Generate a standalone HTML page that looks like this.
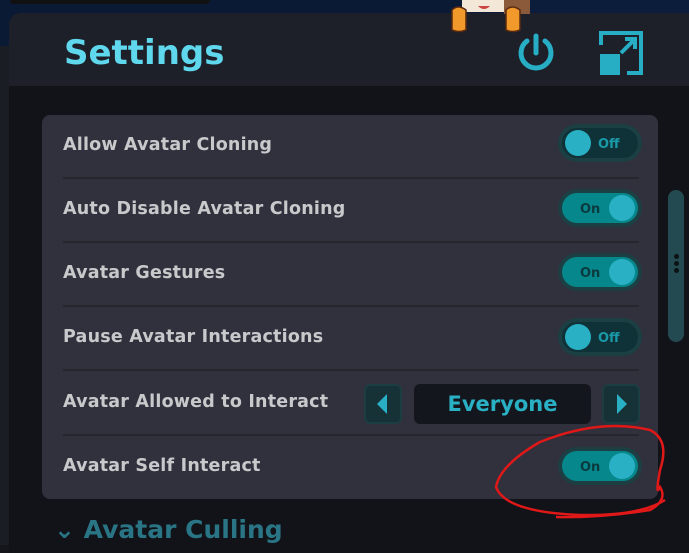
<!DOCTYPE html>
<html><head><style>
*{margin:0;padding:0;box-sizing:border-box}
body{width:689px;height:545px;overflow:hidden;background:#14161c;font-family:"Liberation Sans","DejaVu Sans",sans-serif;position:relative}
.top{position:absolute;left:0;top:0;width:689px;height:46px;background:#0a1a34}
.top .bar{position:absolute;left:10px;top:0;width:200px;height:4px;background:#111;border-radius:0 0 6px 6px}
.top .r{position:absolute;left:465px;top:0;width:224px;height:14px;background:#0c1d3c}
.leftstrip{position:absolute;left:0;top:46px;width:9px;height:499px;background:#1b1d24}
.panel{position:absolute;left:9px;top:13px;width:690px;height:540px;background:#111319;border-radius:12px 0 0 0;overflow:hidden}
.head{position:absolute;left:0;top:0;width:100%;height:73px;background:#1e2029}
.title{position:absolute;left:55px;top:20px;font-size:34px;font-weight:bold;color:#5fd8ee;font-family:"DejaVu Sans",sans-serif}
.card{position:absolute;left:33px;top:102px;width:616px;height:384px;background:#30313d;border-radius:8px}
.row{position:absolute;left:21px;width:576px;height:64px;border-bottom:2px solid #25262e}
.lbl{position:absolute;left:0;top:-2px;line-height:64px;font-size:17.5px;font-weight:bold;color:#c9c9cc;font-family:"DejaVu Sans",sans-serif;letter-spacing:0.2px}
.tg{position:absolute;left:516px;width:84px;height:38px;border-radius:19px;background:#1c3f43}
.tg i{position:absolute;left:4px;top:4px;width:76px;height:30px;border-radius:15px}
.tg b{position:absolute;top:6px;width:26px;height:26px;border-radius:13px;background:#2ab0c4}
.tg span{position:absolute;top:2px;line-height:38px;font-size:13px;font-weight:bold;font-family:"DejaVu Sans",sans-serif}
.off i{background:#0f3238}.off b{left:7px}.off span{left:40px;color:#1a9aa9}
.on i{background:#06878c}.on b{left:51px}.on span{left:22px;color:#0b3a3e}
.scroll{position:absolute;left:659px;top:177px;width:16px;height:152px;background:#234a50;border-radius:8px}
.scroll s{position:absolute;left:6px;width:5px;height:5px;border-radius:3px;background:#0b1214}
</style></head><body>
<div class="top"><div class="bar"></div><div class="r"></div></div>
<div class="leftstrip"></div>
<div class="panel">
 <div class="head"></div>
 <div class="title">Settings</div>
 <svg style="position:absolute;left:505px;top:18px" width="44" height="48" viewBox="0 0 44 48"><path d="M13 10 A15 15 0 1 0 31 10" fill="none" stroke="#27aec4" stroke-width="5" stroke-linecap="round"/><line x1="22" y1="5" x2="22" y2="22" stroke="#27aec4" stroke-width="5" stroke-linecap="round"/></svg>
 <svg style="position:absolute;left:590px;top:18px" width="46" height="46" viewBox="0 0 46 46"><path d="M2 14V2h40v40H28" fill="none" stroke="#27aec4" stroke-width="4"/><rect x="1" y="23" width="20" height="21" fill="#27aec4"/><path d="M22 22L36 8M26 8h10v10" fill="none" stroke="#27aec4" stroke-width="4"/></svg>
 <div class="card">
  <div class="row" style="top:0"><div class="lbl">Allow Avatar Cloning</div></div>
  <div class="row" style="top:64px"><div class="lbl">Auto Disable Avatar Cloning</div></div>
  <div class="row" style="top:128px"><div class="lbl">Avatar Gestures</div></div>
  <div class="row" style="top:192px"><div class="lbl">Pause Avatar Interactions</div></div>
  <div class="row" style="top:256px;height:65px"><div class="lbl" style="line-height:66px">Avatar Allowed to Interact</div></div>
  <div class="row" style="top:321px;border:0"><div class="lbl">Avatar Self Interact</div></div>
  <div class="tg off" style="top:9px"><i></i><b></b><span>Off</span></div>
  <div class="tg on" style="top:74px"><i></i><b></b><span>On</span></div>
  <div class="tg on" style="top:138px"><i></i><b></b><span>On</span></div>
  <div class="tg off" style="top:203px"><i></i><b></b><span>Off</span></div>
  <div class="tg on" style="top:332px"><i></i><b></b><span>On</span></div>
 </div>
 <div class="scroll"><s style="top:64px"></s><s style="top:71px"></s><s style="top:78px"></s></div>
 <div style="position:absolute;left:45px;top:502px;font-size:25px;font-weight:bold;color:#2a7585;font-family:'DejaVu Sans',sans-serif">⌄ Avatar Culling</div>
</div>
<div style="position:absolute;left:364px;top:384px;width:38px;height:40px;background:#163236;border:2px solid #1c3d41;border-radius:6px"><svg width="34" height="36" viewBox="0 0 34 36"><path d="M11 18L21 8v20z" fill="#2ab0c4"/></svg></div>
<div style="position:absolute;left:414px;top:384px;width:177px;height:40px;background:#14161d;border-radius:6px;text-align:center;line-height:40px;font-size:21px;font-weight:bold;color:#2ab0c4;font-family:'DejaVu Sans',sans-serif">Everyone</div>
<div style="position:absolute;left:602px;top:384px;width:38px;height:40px;background:#163236;border:2px solid #1c3d41;border-radius:6px"><svg width="34" height="36" viewBox="0 0 34 36"><path d="M23 18L13 8v20z" fill="#2ab0c4"/></svg></div>
<svg style="position:absolute;left:448px;top:0" width="84" height="34" viewBox="0 0 84 34"><rect x="14" y="0" width="60" height="12" fill="#f3e7d8"/><rect x="56" y="0" width="26" height="14" fill="#8a5a3a"/><path d="M4 10q6-6 14 0v20q-7 3-14 0z" fill="#f19a2b" stroke="#5a2a10" stroke-width="1.5"/><path d="M58 10q6-6 14 0v20q-7 3-14 0z" fill="#f19a2b" stroke="#5a2a10" stroke-width="1.5"/><path d="M30 6q6 6 12 0" fill="#c44"/></svg>
<svg style="position:absolute;left:0;top:0" width="689" height="545"><path d="M556 517 Q600 518 650 510 Q668 500 660 487 Q655 498 660 470 Q670 440 650 430 Q600 418 540 442 Q500 465 496 487 Q505 512 580 515 Q640 516 665 500" fill="none" stroke="#e01818" stroke-width="2.5"/></svg>
</body></html>
